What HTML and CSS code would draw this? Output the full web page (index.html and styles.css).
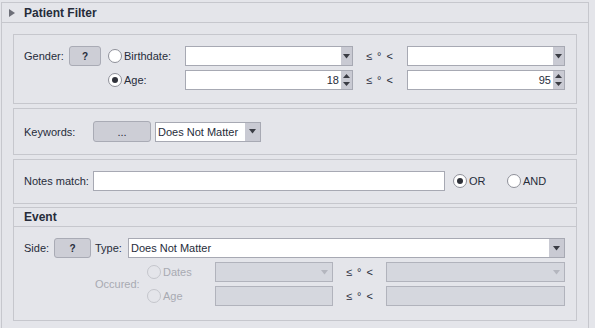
FILE: index.html
```html
<!DOCTYPE html>

<html>
    <head>
        <meta charset="utf-8">

        <link rel="stylesheet" href="styles.css">
    </head>

    <body>
        <div class="panel">
            <div class="panel-head">
                <svg class="caret" width="6" height="8" viewBox="0 0 6 8"><path d="M0 0 L6 4 L0 8 Z" fill="#6d6f78"/></svg>
                <span class="title">Patient Filter</span>
            </div>

            <div class="panel-body">
                <!-- gender / birthdate / age -->
                <div class="group person">
                    <div class="label">Gender:</div>
                    <div><div class="btn small">?</div></div>
                    <div class="radio"><span class="dot"></span>Birthdate:</div>
                    <div class="combo"><div class="field"></div><div class="drop"><svg width="7" height="5" viewBox="0 0 7 5"><path d="M0 0 H7 L3.5 4.5 Z" fill="#3a3c44"/></svg></div></div>
                    <div class="sep">≤ ° &lt;</div>
                    <div class="combo"><div class="field"></div><div class="drop"><svg width="7" height="5" viewBox="0 0 7 5"><path d="M0 0 H7 L3.5 4.5 Z" fill="#3a3c44"/></svg></div></div>

                    <div></div>
                    <div></div>
                    <div class="radio"><span class="dot on"></span>Age:</div>
                    <div class="combo"><div class="field num">18</div><div class="drop spin"><svg width="7" height="14" viewBox="0 0 7 14"><path d="M0 5 H7 L3.5 1 Z M0 9 H7 L3.5 13 Z" fill="#3a3c44"/></svg></div></div>
                    <div class="sep">≤ ° &lt;</div>
                    <div class="combo"><div class="field num">95</div><div class="drop spin"><svg width="7" height="14" viewBox="0 0 7 14"><path d="M0 5 H7 L3.5 1 Z M0 9 H7 L3.5 13 Z" fill="#3a3c44"/></svg></div></div>
                </div>

                <!-- keywords -->
                <div class="group line">
                    <div class="label wide">Keywords:</div>
                    <div class="btn dots">...</div>
                    <div class="combo kw"><div class="field">Does Not Matter</div><div class="drop big"><svg width="7" height="5" viewBox="0 0 7 5"><path d="M0 0 H7 L3.5 4.5 Z" fill="#3a3c44"/></svg></div></div>
                </div>

                <!-- notes -->
                <div class="group line notes">
                    <div class="label wide">Notes match:</div>
                    <div class="field text"></div>
                    <div class="radio or"><span class="dot on"></span>OR</div>
                    <div class="radio"><span class="dot"></span>AND</div>
                </div>

                <!-- event -->
                <div class="group event">
                    <div class="group-head">Event</div>

                    <div class="event-body">
                        <div class="row">
                            <div class="label side">Side:</div>
                            <div class="btn side-btn">?</div>
                            <div class="label type">Type:</div>
                            <div class="combo type-combo"><div class="field">Does Not Matter</div><div class="drop big"><svg width="7" height="5" viewBox="0 0 7 5"><path d="M0 0 H7 L3.5 4.5 Z" fill="#3a3c44"/></svg></div></div>
                        </div>

                        <div class="occured">
                            <div class="label off occ">Occured:</div>
                            <div class="radio off"><span class="dot"></span>Dates</div>
                            <div class="combo off"><div class="field"></div><div class="drop big"><svg width="7" height="5" viewBox="0 0 7 5"><path d="M0 0 H7 L3.5 4.5 Z" fill="#b4b6be"/></svg></div></div>
                            <div class="sep">≤ ° &lt;</div>
                            <div class="combo off"><div class="field"></div><div class="drop big"><svg width="7" height="5" viewBox="0 0 7 5"><path d="M0 0 H7 L3.5 4.5 Z" fill="#b4b6be"/></svg></div></div>

                            <div class="radio off"><span class="dot"></span>Age</div>
                            <div class="field off"></div>
                            <div class="sep">≤ ° &lt;</div>
                            <div class="field off"></div>
                        </div>
                    </div>
                </div>
            </div>
        </div>
    </body>
</html>
```

FILE: styles.css
```css
body
{
    margin: 0;
    background: #e4e5ea;
    font-family: "Liberation Sans", Arial, sans-serif;
    font-size: 11px;
    color: #262c3a;
}

.panel
{
    margin: 2px 0 0 1px;
    width: 586px;
    height: 340px;
    border: 1px solid #c6c7cd;
    border-bottom: none;
}

.panel-head
{
    height: 19px;
    display: flex;
    align-items: center;
    border-bottom: 1px solid #c6c7cd;
}

.caret
{
    margin-left: 7px;
    margin-right: 9px;
}

.title
{
    font-weight: bold;
    font-size: 12px;
}

.panel-body
{
    padding: 11px 11px 0 11px;
    display: flex;
    flex-direction: column;
    gap: 4px;
}

.group
{
    border: 1px solid #c6c7cd;
}

.person
{
    display: grid;
    grid-template-columns: 45px 39px 77px 168px 54px 158px;
    grid-template-rows: 20px 20px;
    row-gap: 4px;
    padding: 11px 11px 13px 10px;
}

.label
{
    display: flex;
    align-items: center;
    height: 20px;
    white-space: nowrap;
}

.wide
{
    width: 69px;
}

.btn
{
    box-sizing: border-box;
    height: 20px;
    display: flex;
    align-items: center;
    justify-content: center;
    background: #cdced6;
    border: 1px solid #a9abb5;
    border-radius: 3px;
    font-weight: bold;
    font-size: 10px;
}

.small
{
    width: 32px;
}

.dots
{
    width: 58px;
    height: 21px;
    margin-right: 4px;
    font-weight: normal;
    font-size: 11px;
}

.radio
{
    display: flex;
    align-items: center;
    height: 20px;
    white-space: nowrap;
}

.dot
{
    box-sizing: border-box;
    width: 14px;
    height: 14px;
    border: 1px solid #8e9099;
    border-radius: 50%;
    background: white;
    margin-right: 2px;
    display: flex;
    align-items: center;
    justify-content: center;
}

.dot.on::after
{
    content: "";
    width: 6px;
    height: 6px;
    border-radius: 50%;
    background: #30323a;
}

.combo
{
    box-sizing: border-box;
    height: 20px;
    display: flex;
    border: 1px solid #a7a9b3;
    background: white;
}

.field
{
    box-sizing: border-box;
    flex: 1;
    height: 100%;
    display: flex;
    align-items: center;
    padding: 0 2px;
    background: white;
    white-space: nowrap;
}

.num
{
    justify-content: flex-end;
}

.drop
{
    width: 11px;
    height: 100%;
    background: #c9cad3;
    display: flex;
    align-items: center;
    justify-content: center;
}

.drop.big
{
    width: 15px;
}

.sep
{
    display: flex;
    align-items: center;
    height: 20px;
    padding-left: 13px;
    letter-spacing: 1px;
}

.line
{
    display: flex;
    align-items: center;
    padding: 12px 0 12px 10px;
}

.kw
{
    width: 106px;
}

.notes
{
    padding: 11px 0 12px 10px;
}

.text
{
    flex: none;
    width: 352px;
    height: 20px;
    border: 1px solid #a7a9b3;
    margin-right: 8px;
}

.or
{
    width: 54px;
}

.event
{
    margin-top: -1px;
}

.group-head
{
    height: 18px;
    display: flex;
    align-items: center;
    padding-left: 10px;
    font-weight: bold;
    font-size: 12px;
    border-bottom: 1px solid #c6c7cd;
}

.event-body
{
    padding: 11px 11px 14px 10px;
    display: flex;
    flex-direction: column;
    gap: 4px;
}

.row
{
    display: flex;
    align-items: center;
}

.side
{
    width: 30px;
}

.side-btn
{
    width: 37px;
    margin-right: 4px;
}

.type
{
    width: 33px;
}

.type-combo
{
    flex: 1;
}

.occured
{
    display: grid;
    grid-template-columns: 123px 68px 118px 53px 179px;
    grid-template-rows: 20px 20px;
    row-gap: 4px;
}

.occ
{
    grid-row: 1 / 3;
    height: 44px;
    padding-left: 71px;
}

.off
{
    color: #a8aab2;
}

.combo.off
{
    border-color: #b1b3bc;
    background: #d5d7de;
}

.combo.off .field,
.field.off
{
    background: #d5d7de;
}

.field.off
{
    border: 1px solid #b1b3bc;
}

.combo.off .drop
{
    background: #d5d7de;
}

.radio.off .dot
{
    border-color: #c4c6cc;
    background: #e4e5ea;
}
```
